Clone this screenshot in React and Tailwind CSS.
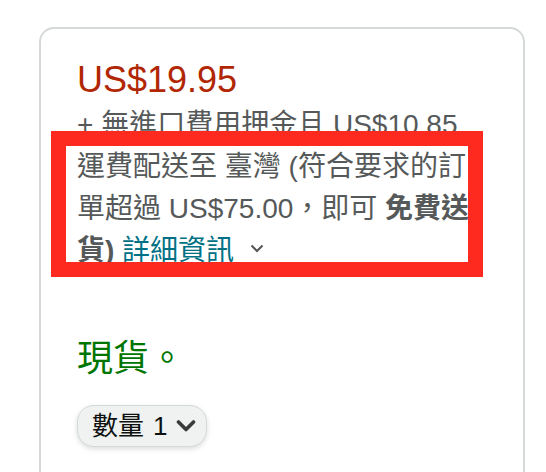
import React from 'react'

const font = { fontFamily: '"Liberation Sans", "Noto Sans CJK TC", sans-serif' }

export default function App() {
  return (
    <div className="h-screen bg-white overflow-hidden" style={font}>
      <div className="pt-[27px] pl-[39px]">
        <div className="relative w-[486px] h-[500px] border-2 border-[#d5d9d9] rounded-[15px] pt-[27px] pl-[36px]">
          {/* Price */}
          <div className="text-[36px] leading-[48px] text-[#b12704]">US$19.95</div>

          {/* Shipping info */}
          <div className="w-[405px] text-[28px] leading-[42px] text-[#565959]">
            <div>+ 無進口費用押金且 US$10.85</div>
            <div>
              運費配送至 臺灣 (符合要求的訂單超過 US$75.00，即可 <span className="font-bold">免費送貨)</span>{' '}
              <span className="text-[#007185]">詳細資訊</span>
              <svg className="inline-block ml-[16px] mb-[8px]" width="14" height="9" viewBox="0 0 14 9" fill="none">
                <path d="M1.5 1.5 L7 7 L12.5 1.5" stroke="#555" strokeWidth="2" />
              </svg>
            </div>
          </div>

          {/* Availability */}
          <div className="mt-[63px] text-[36px] leading-[48px] text-[#007600]">現貨。</div>

          {/* Quantity */}
          <div className="mt-[22px]">
            <button className="flex items-center h-[42px] w-[130px] pl-[14px] rounded-[17px] bg-[#f0f2f2] border border-[#d5d9d9] shadow-[0_2px_5px_rgba(15,17,17,0.15)] text-[26px] text-[#0f1111]">
              <span>數量</span>
              <span className="ml-[9px]">1</span>
              <svg className="ml-[9px]" width="20" height="12" viewBox="0 0 20 12" fill="none">
                <path d="M2.5 2 L10 9.5 L17.5 2" stroke="#3a3a3a" strokeWidth="3.6" strokeLinecap="round" strokeLinejoin="round" />
              </svg>
            </button>
          </div>

          {/* Highlight annotation */}
          <div className="absolute left-[10px] top-[102px] w-[432px] h-[146px] border-[15px] border-[#ff2a1f] pointer-events-none" />
        </div>
      </div>
    </div>
  )
}
